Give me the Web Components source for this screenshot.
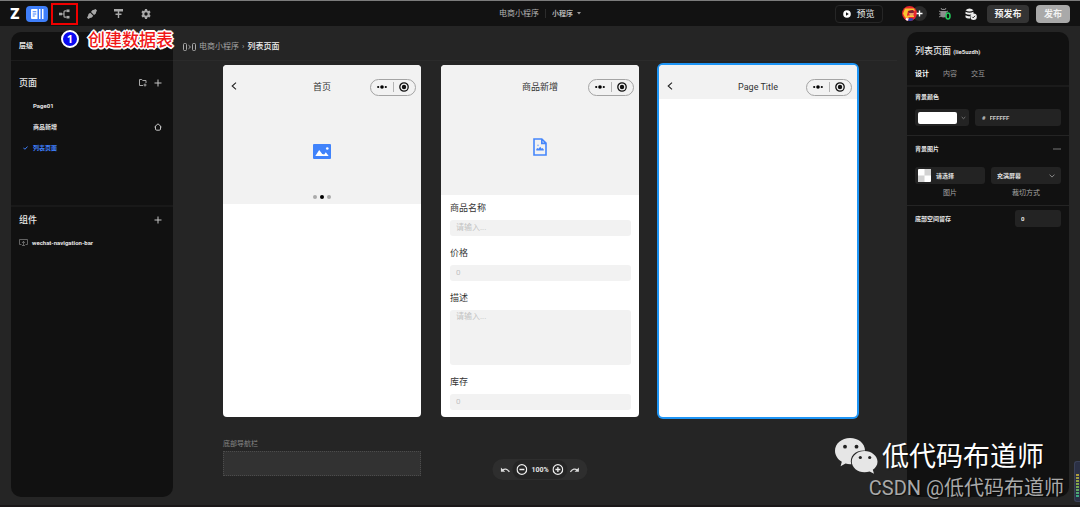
<!DOCTYPE html>
<html lang="zh-CN">
<head>
<meta charset="utf-8">
<title>电商小程序</title>
<style>
  html, body { margin: 0; }
  body {
    min-height: 100vh; background: #252525; color: #e6e6e6;
    font-family: Roboto, "Noto Sans CJK SC", sans-serif; font-size: 9px; line-height: 12px;
  }
</style>
</head>
<body>
<builder-app></builder-app>
<script>
const BASE = `
  *, *::before, *::after { box-sizing: border-box; }
  :host { display: block; }
  button, input, textarea, select { font: inherit; color: inherit; background: none; border: 0; margin: 0; padding: 0; outline: 0; appearance: none; border-radius: 0; }
  button { cursor: pointer; }
  a { color: inherit; text-decoration: none; }
  h2, h3, p, ul { margin: 0; padding: 0; font: inherit; list-style: none; }
  svg { display: block; }
`;
function define(name, html) {
  customElements.define(name, class extends HTMLElement {
    constructor() {
      super();
      const root = this.attachShadow({ mode: "open" });
      const t = document.createElement("template");
      const markup = typeof html === "function" ? html(this) : html;
      t.innerHTML = `<style>${BASE}</style>` + markup;
      root.append(t.content.cloneNode(true));
    }
  });
}

define("app-header", `
<style>
  :host { border-top: 1px solid #7c7c7c; background: #121212; }
  header { display: grid; grid-template-columns: 1fr auto 1fr; align-items: center; height: 25px; padding: 0 10px; }
  .group { display: flex; align-items: center; }
  .logo { width: 10px; margin-right: 6px; font: 900 14px/16px Inter, sans-serif; color: #fff; }
  .tool { width: 27px; height: 22px; display: grid; place-items: center; color: #a8a8a8; }
  .tool.active { width: 22px; height: 16px; margin-right: 3px; border-radius: 4px; background: #3f7ffa; color: #fff; }
  .marked { position: relative; }
  .marked::after { content: ""; position: absolute; inset: 0; border: 2px solid #f00000; }
  .title { font-size: 8px; color: #b4b4b4; gap: 6px; }
  .title i { width: 1px; height: 9px; background: #2c2c2c; }
  .title label { display: flex; align-items: center; gap: 4px; }
  .title select { font-weight: 700; font-size: 7px; height: 12px; }
  .right { justify-content: flex-end; color: #f0f0f0; }
  .right button.text { height: 18px; border-radius: 4px; }
  .preview { display: flex; align-items: center; justify-content: center; gap: 5px; width: 48px; border: 1px solid #262626; margin-right: 19px; }
  .people { display: flex; align-items: center; margin-right: 12px; }
  .people svg { position: relative; z-index: 1; margin-right: -5px; }
  .people button { width: 15px; height: 15px; border-radius: 50%; background: #2a2a2a; display: grid; place-items: center; }
  .people button svg { margin: 0; }
  .bug { margin-right: 14px; }
  .db { margin-right: 10px; }
  .pre { width: 42px; background: #343434; font-weight: 700; margin-right: 7px; }
  .pub { width: 34px; background: #a9a9a9; color: #f2f2f2; font-weight: 700; }
</style>
<header>
  <nav class="group">
    <span class="logo">Z</span>
    <button class="tool active" aria-label="页面"><svg width="13" height="10" viewBox="0 0 13 10" fill="currentColor"><path fill-rule="evenodd" d="M1 0h5.500v10H1a1 1 0 0 1-1-1V1a1 1 0 0 1 1-1zm.7 2.200v1h3.600v-1zm0 2.200v1h3.600v-1zm0 2.200v1h2v-1z"/><path d="M8 0h1.500v10H8zM11 0h1.500v10H11z"/></svg></button>
    <button class="tool marked" aria-label="数据模型"><svg width="11" height="10" viewBox="0 0 11 10" fill="currentColor"><rect x="0" y="3.700" width="3" height="2.600"/><rect x="7.500" y="0.500" width="3" height="2.600"/><rect x="7.500" y="6.900" width="3" height="2.600"/><path d="M7.500 1.800H6Q5 1.800 5 2.800v4.400q0 1 1 1h1.500M3 5h2" fill="none" stroke="currentColor" stroke-width="1.200"/></svg></button>
    <button class="tool" aria-label="接口"><svg width="10" height="10" viewBox="0 0 10 10" fill="currentColor"><path d="M5.300 1.200 7 .8l1.600-.8L10 1.400 9.200 3l-.5 1.700-2 1.500-2.900-2.900zM3.200 3.800l3 3-1.300 1.700-1.900.5L1.400 10 0 8.600 1 7l.5-1.900z"/><path d="m3 2.500 4.500 4.500" stroke="#121212" stroke-width=".9"/></svg></button>
    <button class="tool" aria-label="逻辑"><svg width="9" height="9" viewBox="0 0 9 9" fill="currentColor"><path d="M0 0h9v2.400H0zM3.800 2h1.400v7H3.800zM1.500 4.500h6v1.400h-6z"/></svg></button>
    <button class="tool" aria-label="设置"><svg width="10" height="10" viewBox="0 0 10 10" fill="currentColor"><path fill-rule="evenodd" d="M4 0h2l.3 1.400.9.5L8.500 1.400l1.100 1.800-1 1v1.400l1 1.100-1.100 1.800-1.300-.4-.9.500L6 10H4l-.3-1.400-.9-.5-1.300.4L.4 6.700l1-1.100V4.200l-1-1 1.100-1.800 1.300.5.900-.5zM5 3.300a1.700 1.700 0 1 0 0 3.400 1.700 1.700 0 0 0 0-3.400z"/></svg></button>
  </nav>
  <div class="group title"><span>电商小程序</span><i></i>
    <label><select aria-label="平台"><option>小程序</option></select><svg width="4" height="3" viewBox="0 0 4 3" fill="#9a9a9a"><path d="M0 0h4L2 2.500z"/></svg></label>
  </div>
  <div class="group right">
    <button class="text preview"><svg width="8" height="8" viewBox="0 0 8 8"><circle cx="4" cy="4" r="3.800" fill="#fff"/><path d="M3 2.200 5.800 4 3 5.800z" fill="#121212"/></svg>预览</button>
    <div class="people">
      <svg width="15" height="15" viewBox="0 0 15 15"><defs><clipPath id="c"><circle cx="7.500" cy="7.500" r="7.500"/></clipPath></defs><g clip-path="url(#c)"><path fill="#e8262c" d="M0 0h15v15H0z"/><path fill="#f7c531" d="M3 2.500h9l1 2.500-3-1-4 1-1 4 2 3.500-4-1-2-4z"/><path fill="#7b2430" d="M6 5l5-1 1 2-1 1H7z"/><path fill="#ef9a67" d="M7 7h5l-1 3H8z"/><path fill="#f7c531" d="M6 9.500h6V11H6z"/><path fill="#fff" d="M4 12l3 .5L6 15H3z"/><path fill="#2b3fae" d="M7 12l4 .5 1 2.500H6z"/></g></svg>
      <button aria-label="添加成员"><svg width="7" height="7" viewBox="0 0 7 7"><path d="M3.500.5v6M.5 3.500h6" stroke="#fff" stroke-width="1.400"/></svg></button>
    </div>
    <button class="bug" aria-label="调试"><svg width="12" height="13" viewBox="0 0 12 13"><path d="M1.500 4h6v5.500Q4.500 11.500 1.500 9.500zM2 3Q4.500.5 7 3z" fill="#8d8d8d"/><path d="M0 4l2 1M0 7h2M0 10l2-1M7 5l2-1M2 1l1 1.500M7 1 6 2.500" stroke="#8d8d8d"/><ellipse cx="9" cy="9" rx="2" ry="3" fill="#121212" stroke="#24c75a" stroke-width="1.600"/></svg></button>
    <button class="db" aria-label="数据库"><svg width="12" height="12" viewBox="0 0 12 12"><path d="M.5 2.200Q4.500-1 8.500 2.200 4.500 5 .5 2.200zM.5 3.700q4 2.300 8 0v2q-4 2.300-8 0zM.5 7.200Q3 8.700 5 8.200v2.300Q2 11 .5 9.200z" fill="#eee"/><circle cx="8.600" cy="8.700" r="3.200" fill="#eee"/><path d="m7.200 8.800 1 1 1.900-2" fill="none" stroke="#121212" stroke-width=".9"/></svg></button>
    <button class="text pre">预发布</button>
    <button class="text pub">发布</button>
  </div>
</header>`);

define("step-callout", `
<style>
  :host { display: flex; align-items: center; gap: 9px; }
  b { width: 18px; height: 18px; border: 2px solid #fff; border-radius: 50%; background: #0a0af0; color: #fff; font: 700 11px/14px "Open Sans", sans-serif; text-align: center; }
  span { color: #f01818; font: 500 17px/22px "Noto Sans CJK SC", sans-serif; text-shadow: 1px 0 #fff, -1px 0 #fff, 0 1px #fff, 0 -1px #fff, 1px 1px #fff, -1px -1px #fff, 1px -1px #fff, -1px 1px #fff, 2px 0 #fff, -2px 0 #fff, 0 2px #fff, 0 -2px #fff; }
</style>
<b>1</b><span><slot></slot></span>`);

define("layer-panel", `
<style>
  :host { background: #111; border-radius: 10px; }
  .bar { display: flex; align-items: center; justify-content: space-between; height: 29px; padding: 0 10px 0 8px; border-bottom: 1px solid #1c1c1c; font-size: 7px; font-weight: 700; }
  .head { display: flex; align-items: center; gap: 7px; height: 24px; padding: 0 11px 0 8px; }
  .head h3 { flex: 1; font-weight: 500; }
  section { border-bottom: 2px solid #191919; }
  section:last-child { border: 0; }
  .pages { padding-top: 10px; min-height: 146px; }
  ul { font-size: 6px; font-weight: 700; }
  li a { display: flex; align-items: center; height: 21px; padding: 0 11px 0 12px; }
  li svg:first-child { flex: none; }
  li .mark { width: 10px; }
  li span { flex: 1; }
  li.on { color: #3f7ffa; }
  .comps li a { padding-left: 8px; gap: 4px; }
  .comps { padding-top: 1px; }
</style>
<div class="bar"><h2>层级</h2><button aria-label="搜索"><svg width="8" height="8" viewBox="0 0 8 8" fill="none" stroke="#666"><circle cx="3.500" cy="3.500" r="2.500"/><path d="m5.500 5.500 2 2"/></svg></button></div>
<section class="pages">
  <div class="head"><h3>页面</h3>
    <button aria-label="新建分组"><svg width="8" height="8" viewBox="0 0 8 8" fill="none" stroke="#a8a8a8"><path d="M4 6.500H.5v-6h2.300l.9 1h3.300V4M6 4.500v3M4.500 6h3"/></svg></button>
    <button aria-label="新建页面"><svg width="8" height="8" viewBox="0 0 8 8" stroke="#c4c4c4"><path d="M4 .5v7M.5 4h7"/></svg></button></div>
  <ul>
    <li><a href="#page01"><i class="mark"></i><span>Page01</span></a></li>
    <li><a href="#new"><i class="mark"></i><span>商品新增</span><svg width="8" height="8" viewBox="0 0 8 8" fill="none" stroke="#c4c4c4"><path d="M.5 4 4 .8 7.500 4M1.500 3.200V6q0 1.200 1.200 1.200h2.600Q6.500 7.200 6.500 6V3.200"/></svg></a></li>
    <li class="on"><a href="#list"><i class="mark"><svg width="5" height="4" viewBox="0 0 5 4" fill="none" stroke="currentColor"><path d="m.4 1.700 1.500 1.600L4.600.5"/></svg></i><span>列表页面</span></a></li>
  </ul>
</section>
<section class="comps">
  <div class="head"><h3>组件</h3><button aria-label="新建组件"><svg width="8" height="8" viewBox="0 0 8 8" stroke="#c4c4c4"><path d="M4 .5v7M.5 4h7"/></svg></button></div>
  <ul><li><a href="#nav"><svg width="9" height="7" viewBox="0 0 9 7" fill="none" stroke="#777" stroke-width=".8"><path d="M2.500 5.500H.5v-5h8v5h-2M4.500 2v4.500M3 4l1.500-1.700L6 4M3 6.500h3"/></svg><span>wechat-navigation-bar</span></a></li></ul>
</section>`);

define("property-panel", `
<style>
  :host { background: #111; border-radius: 10px; font-size: 7px; }
  .top { padding: 13px 8px 5px; border-bottom: 2px solid #1b1b1b; }
  h2 { font-size: 9px; font-weight: 500; }
  h2 small { font-size: 6px; font-weight: 700; }
  .tabs { display: flex; gap: 14px; margin-top: 10px; color: #9a9a9a; }
  .tabs .on { color: #fff; font-weight: 700; }
  .block { padding: 4px 8px 9px; border-bottom: 1px solid #242424; }
  h3 { display: flex; align-items: center; justify-content: space-between; font-weight: 700; font-size: 6px; line-height: 12px; margin-bottom: 6px; }
  .row { display: grid; gap: 6px; }
  .ctl { display: flex; align-items: center; height: 17px; border-radius: 3px; background: #232323; padding: 0 3px; font-size: 6px; font-weight: 700; width: 100%; }
  .ctl input, .ctl select { flex: 1; min-width: 0; width: 100%; height: 17px; }
  .color { grid-template-columns: 54px 1fr; }
  .swatch { justify-content: space-between; }
  .swatch i { width: 39px; height: 12px; background: #fff; border-radius: 2px; }
  .hex { padding: 0 7px; gap: 4px; color: #c8c8c8; }
  .pic { grid-template-columns: 1fr 1fr; text-align: center; color: #a6a6a6; row-gap: 3px; }
  .pic .ctl { color: #e0e0e0; gap: 5px; }
  .pic .sel { padding: 0 6px; }
  .image { padding: 7px 8px 6px; }
  .image h3 { margin-bottom: 12px; }
  .last { display: flex; justify-content: space-between; align-items: center; padding: 4px 8px; font-size: 6px; font-weight: 700; }
  .last .ctl { width: 46px; padding: 0 6px; }
</style>
<div class="top">
  <h2>列表页面 <small>(lie5uzdh)</small></h2>
  <div class="tabs"><button class="on">设计</button><button>内容</button><button>交互</button></div>
</div>
<section class="block">
  <h3>背景颜色</h3>
  <div class="row color">
    <button class="ctl swatch" aria-label="选择颜色"><i></i><svg width="5" height="4" viewBox="0 0 5 4" fill="none" stroke="#777"><path d="m.7 1 1.800 1.700L4.300 1"/></svg></button>
    <label class="ctl hex">#<input value="FFFFFF" aria-label="颜色值"></label>
  </div>
</section>
<section class="block image">
  <h3>背景图片<button aria-label="收起"><svg width="8" height="2" viewBox="0 0 8 2"><path d="M0 1h8" stroke="#777"/></svg></button></h3>
  <div class="row pic">
    <button class="ctl" id="image"><svg width="13" height="13" viewBox="0 0 13 13"><rect width="13" height="13" rx="1" fill="#fff"/><path d="M6.500 0H13v6.500H6.500zM0 6.500h6.500V13H0z" fill="#d2d2d2"/></svg>请选择</button>
    <div class="ctl sel"><select id="fit"><option>充满屏幕</option></select><svg width="6" height="4" viewBox="0 0 6 4" fill="none" stroke="#888"><path d="m.5.6 2.500 2.500L5.500.6"/></svg></div>
    <label for="image">图片</label><label for="fit">裁切方式</label>
  </div>
</section>
<section class="last"><label for="space">底部空间留存</label><span class="ctl"><input id="space" value="0"></span></section>`);

define("phone-frame", el => `
<style>
  :host { flex: none; width: 198px; min-height: 351px; border-radius: 4px; background: #fff; color: #333; overflow: hidden; }
  :host([selected]) { box-shadow: 0 0 0 2px #1e95f5; }
  nav { display: grid; grid-template-columns: 1fr auto 1fr; align-items: center; height: 34px; padding: 10px 5px 0; background: #f2f2f2; }
  .back { width: 11px; padding-left: 3px; }
  .cap { justify-self: end; display: grid; grid-template-columns: 1fr 1px 1fr; align-items: center; justify-items: center; width: 46px; height: 17px; border: 1px solid #a4a4a4; border-radius: 9px; }
  .cap i { width: 1px; height: 10px; background: #b4b4b4; }
  h2 { font-size: 9px; }
</style>
<nav>
  <span>${el.hasAttribute("root") ? "" : `<button class="back" aria-label="返回"><svg width="6" height="8" viewBox="0 0 6 8" fill="none" stroke="#222" stroke-width="1.100"><path d="M5 .6 1.200 4 5 7.400"/></svg></button>`}</span>
  <h2>${el.getAttribute("heading")}</h2>
  <span class="cap"><svg width="10" height="4" viewBox="0 0 10 4"><circle cx="1.200" cy="2" r="1.100"/><circle cx="5" cy="2" r="1.800"/><circle cx="8.800" cy="2" r="1.100"/></svg><i></i><svg width="10" height="10" viewBox="0 0 10 10"><circle cx="5" cy="5" r="4.200" fill="none" stroke="#111" stroke-width="1.300"/><circle cx="5" cy="5" r="2.200" fill="#111"/></svg></span>
</nav>
<slot></slot>`);

define("hero-block", `
<style>
  :host { display: grid; grid-template-rows: 1fr auto; place-items: center; height: 105px; background: #f2f2f2; }
  :host([short]) { height: 96px; }
</style>
<slot></slot><slot name="dots"></slot>`);

define("image-glyph", el => el.hasAttribute("file") ? `
<svg width="14" height="18" viewBox="0 0 14 18" fill="none" stroke="#4586fb" stroke-width="1.600"><path d="M1 1h7.800L13 5.200V17H1zM8.800 1v4.400H13"/><path d="M3.300 12.500V11l1.200-1 1 .8 1.700-2 1.500 2 .8-.8 1.300 1.500v1z" fill="#4586fb" stroke="none"/><circle cx="5" cy="7.300" r=".9" fill="#8fb5fc" stroke="none"/></svg>` : `
<style>:host { padding-top: 8px; }</style>
<svg width="18" height="15" viewBox="0 0 18 15"><rect width="18" height="15" rx="1" fill="#4083fb"/><path d="M2.300 12 6.200 6l3 4 2 .5 1.600-2.300 2.900 3.800z" fill="#fff"/><circle cx="14.300" cy="4.500" r="1.300" fill="#fff"/></svg>`);

define("page-dots", `
<style>
  :host { display: flex; gap: 3px; padding-bottom: 5px; }
  i { width: 4px; height: 4px; border-radius: 50%; background: #aaa; }
  i:nth-of-type(2) { background: #000; }
</style>
<i></i><i></i><i></i>`);

define("form-field", el => `
<style>
  label { display: block; line-height: 13px; margin-bottom: 5px; font-size: 9px; }
  input, textarea { display: block; width: 100%; height: 16px; padding: 0 6px 2px; border-radius: 3px; background: #f2f2f2; font-size: 8px; line-height: 12px; resize: none; }
  textarea { height: 55px; padding-top: 1px; }
  ::placeholder { color: #c2c2c2; opacity: 1; }
</style>
<label for="f">${el.getAttribute("label")}</label>
${el.hasAttribute("multiline") ? `<textarea id="f" placeholder="${el.getAttribute("hint")}"></textarea>` : `<input id="f" placeholder="${el.getAttribute("hint")}">`}`);

define("zoom-bar", `
<style>
  :host { display: flex; align-items: center; height: 21px; padding: 0 8px; border-radius: 11px; background: #2e2e2e; }
  div { display: flex; align-items: center; gap: 4px; height: 19px; margin: 0 2px; padding: 0 4px; border-radius: 10px; background: #252525; font-size: 7px; font-weight: 700; }
</style>
<button aria-label="撤销"><svg width="10" height="6" viewBox="0 0 10 6"><path d="M2 3.300Q5.500.3 9 4.800" fill="none" stroke="#ddd" stroke-width="1.300"/><path d="M.5.500v4.300H4.800z" fill="#ddd"/></svg></button>
<div><button aria-label="缩小"><svg width="11" height="11" viewBox="0 0 11 11" fill="none" stroke="#eee" stroke-width="1.300"><circle cx="5.500" cy="5.500" r="4.800"/><path d="M3 5.500h5"/></svg></button><span>100%</span><button aria-label="放大"><svg width="11" height="11" viewBox="0 0 11 11" fill="none" stroke="#eee" stroke-width="1.300"><circle cx="5.500" cy="5.500" r="4.800"/><path d="M3 5.500h5M5.500 3v5"/></svg></button></div>
<button aria-label="重做"><svg width="10" height="6" viewBox="0 0 10 6"><path d="M8 3.300Q4.500.3 1 4.800" fill="none" stroke="#ddd" stroke-width="1.300"/><path d="M9.500.500v4.300H5.200z" fill="#ddd"/></svg></button>`);

define("design-canvas", `
<style>
  :host { position: relative; min-width: 0; }
  .crumb { display: flex; align-items: center; gap: 3px; height: 29px; padding: 2px 10px 0; border-bottom: 1px solid #2b2b2b; margin-right: 10px; font-size: 8px; color: #a4a4a4; }
  .crumb a:last-child { color: #eee; font-weight: 500; }
  .phones { display: flex; gap: 20px; padding: 4px 0 0 50px; }
  .form { display: grid; gap: 11px; padding: 7px 8px 7px 9px; }
  .tab { width: 198px; margin: 22px 0 0 50px; font-size: 7px; line-height: 11px; color: #858585; }
  .tab div { height: 25px; margin-top: 1px; border: 1px dotted #4c4c4c; background: #323232; }
  zoom-bar { position: absolute; bottom: 17px; left: 50%; transform: translateX(-50%); }
</style>
<div class="crumb"><svg width="13" height="8" viewBox="0 0 13 8" fill="none" stroke="#aaa"><rect x=".5" y=".5" width="3" height="7" rx="1"/><rect x="9.500" y=".5" width="3" height="7" rx="1"/><path d="m5.500 2.200 2 1.800-2 1.800"/></svg><a href="#app">电商小程序</a><span>›</span><a href="#list">列表页面</a></div>
<div class="phones">
  <phone-frame heading="首页"><hero-block><image-glyph></image-glyph><page-dots slot="dots"></page-dots></hero-block></phone-frame>
  <phone-frame heading="商品新增" root><hero-block short><image-glyph file></image-glyph></hero-block>
    <div class="form">
      <form-field label="商品名称" hint="请输入..."></form-field>
      <form-field label="价格" hint="0"></form-field>
      <form-field label="描述" hint="请输入..." multiline></form-field>
      <form-field label="库存" hint="0"></form-field>
    </div></phone-frame>
  <phone-frame heading="Page Title" selected></phone-frame>
</div>
<div class="tab">底部导航栏<div></div></div>
<zoom-bar></zoom-bar>`);

define("author-mark", `
<style>
  :host { font-family: Roboto, "Noto Sans CJK SC", sans-serif; text-shadow: 1px 1px 1px #0009; }
  .name { display: flex; align-items: center; justify-content: flex-end; gap: 4px; font-size: 27px; line-height: 34px; color: #fff; margin-right: 20px; }
  .name svg { margin-bottom: 2px; }
  .site { font-size: 20px; line-height: 24px; color: #a9a9a9; text-align: right; }
</style>
<div class="name"><svg width="43" height="36" viewBox="0 0 43 36"><path fill="#e6e6e6" d="M15 0c8.300 0 15 5.500 15 12.400v.2C20.500 12 14 18.500 16.300 26.200a19 19 0 0 1-5.800-.6L5.600 28.300l1.200-4.600C2.700 21.500 0 17.200 0 12.800 0 5.500 6.700 0 15 0z"/><path fill="#e6e6e6" d="M29.500 13C36.400 13 42.500 17.800 42.500 23.700c0 3.300-1.900 6.100-4.700 8.100l1.200 4-4.300-2.400a18 18 0 0 1-5.200.8c-7 0-12.700-4.700-12.700-10.500S22.500 13 29.500 13z"/><g fill="#222"><circle cx="10" cy="8.700" r="1.900"/><circle cx="21.500" cy="8.700" r="1.900"/><circle cx="25.300" cy="19.500" r="1.600"/><circle cx="34.700" cy="19.500" r="1.600"/></g></svg><span>低代码布道师</span></div>
<div class="site">CSDN @低代码布道师</div>`);

define("level-meter", `
<style>
  :host { box-sizing: border-box; width: 6px; height: 41px; padding: 12px 0 3px 1px; border-radius: 3px 0 0 3px; background: #2b3045; border: 1px solid #3a4158; border-right: 0; }
  i { display: block; width: 3px; height: 100%; background: repeating-linear-gradient(#0000 0 2px, #2b3045 2px 3px), linear-gradient(#b29a3a, #7aa84a 50%, #2fa58c); }
</style><i></i>`);

define("builder-app", `
<style>
  :host { position: relative; display: grid; grid-template-rows: auto 1fr; min-height: 100vh; box-sizing: border-box; border-bottom: 2px solid #1a1718; }
  main { display: grid; grid-template-columns: 162px 1fr 162px; padding: 6px 11px 8px; }
  step-callout { position: absolute; left: 61px; top: 28px; }
  author-mark { position: absolute; right: 16px; bottom: 5px; }
  level-meter { position: absolute; right: 0; bottom: 3px; }
</style>
<app-header></app-header>
<main><layer-panel></layer-panel><design-canvas></design-canvas><property-panel></property-panel></main>
<step-callout>创建数据表</step-callout>
<author-mark></author-mark>
<level-meter></level-meter>`);
</script>
</body>
</html>
